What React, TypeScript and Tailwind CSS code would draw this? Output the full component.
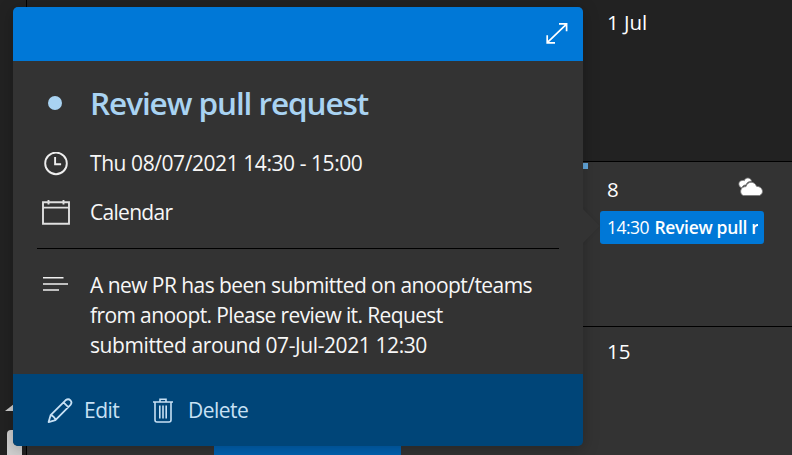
import React from "react";

function DayCell({ label, children, className }: { label: string; children?: React.ReactNode; className: string }) {
  return (
    <div className={`pl-[580px] pr-7 text-[20.5px] leading-[30px] text-white ${className}`}>
      <div className="flex items-center justify-between">
        <span>{label}</span>
        {label === "8" && <CloudIcon />}
      </div>
      {children}
    </div>
  );
}

function CloudIcon() {
  return (
    <svg className="mt-[-4px] h-[20px] w-[26px]" viewBox="0 0 26 20" fill="#fff" stroke="#777" strokeWidth="0.8">
      <path d="M3 10.5C0 9 0 4 4 3.5 5 3.2 6 3.5 6.3 3.7 7 0.5 12.5-.5 13.6 4.3 10 4 8.5 6.5 8 8 5.5 8 4.5 9 4 10.8Z" />
      <path d="M5.5 18.5C1.5 18 1.3 9.5 8 9.6 9.5 4 16.5 3.8 18.5 9.3 25 9.5 26.5 16.5 21.5 18.5Z" />
    </svg>
  );
}

function ExpandIcon() {
  return (
    <svg className="h-6 w-6" viewBox="0 0 24 24" fill="none" stroke="#fff" strokeWidth="1.7">
      <path d="M2.5 20.3 21.5 2.2M14 1.8h7.6v7.4M2.2 13.3v7.5H10" />
    </svg>
  );
}

function ClockIcon() {
  return (
    <svg className="h-6 w-7" viewBox="0 0 28 24" fill="none" stroke="#eee" strokeWidth="1.9">
      <circle cx="14" cy="11.4" r="10.8" />
      <path d="M13.1 5v7.3h6" />
    </svg>
  );
}

function CalendarIcon() {
  return (
    <svg className="h-[26px] w-7" viewBox="0 0 28 26" fill="none" stroke="#e0e0e0" strokeWidth="1.9">
      <path d="M1 2.2h26v21.6H1ZM1 7.6h26M6.5 0v4.5M21.5 0v4.5" />
    </svg>
  );
}

function NotesIcon() {
  return (
    <svg className="h-4 w-7" viewBox="0 0 28 16" fill="none" stroke="#f0f0f0" strokeWidth="1.6">
      <path d="M1 1.8h20.5M1 8h25M1 14h16" />
    </svg>
  );
}

function PencilIcon() {
  return (
    <svg className="h-[26px] w-[26px]" viewBox="0 0 26 26" fill="none" stroke="#c7e0f4" strokeWidth="1.8" strokeLinejoin="round">
      <path d="M1.6 24.1 3.6 17.2 18.5 2.3C22.3-.6 26.3 3.6 23.3 7.2L8.4 22.1ZM3.6 17.2c2 .2 4.6 2.7 4.8 4.9M16.5 4.3l5 5" />
    </svg>
  );
}

function TrashIcon() {
  return (
    <svg className="h-[26px] w-5" viewBox="0 0 20 26" fill="none" stroke="#c7e0f4" strokeWidth="1.6">
      <path d="M0 4h20M7 4V1.3h6V4M2 4v18Q2 24 4 24h12q2 0 2-2V4M6.8 7.5v13M10 7.5v13M13.2 7.5v13" />
    </svg>
  );
}

export default function App() {
  return (
    <div className="relative flex h-[455px] w-[792px] overflow-hidden bg-[#222] font-['Open_Sans','Noto_Sans',sans-serif]">
      <aside className="flex w-[26px] flex-col justify-end">
        <div className="ml-[5px] h-0 w-0 border-x-[9px] border-b-[7px] border-x-transparent border-b-[#d0d0d0]" />
        <div className="mt-[19px] ml-[7px] h-[25px] w-[15px] rounded-t bg-[#d0d0d0]" />
      </aside>
      <main className="flex min-w-0 flex-1 flex-col border-l border-black">
        <DayCell label="1 Jul" className="h-[161px] bg-[#222] pt-[7px]" />
        <DayCell label="8" className="h-[165px] border-t border-black bg-[#333] pt-3">
          <div className="mt-[7px] ml-[-7px] h-[33px] rounded-[3px] bg-[#0078d7] px-[7px] text-[17.5px] leading-[33px]">
            <div className="w-[151px] overflow-hidden whitespace-nowrap">
              <span className="tracking-[-0.55px]">14:30</span> <span className="ml-px font-semibold tracking-[-0.32px]">Review pull request</span>
            </div>
          </div>
        </DayCell>
        <DayCell label="15" className="h-[129px] border-t border-black bg-[#333] pt-[9px]">
          <div className="mt-[78px] ml-[-393px] h-3 w-[187px] bg-[#0062b1]" />
        </DayCell>
      </main>

      <div className="absolute top-[163px] left-[575px] h-[6px] w-[13px] bg-[#64a9df]" />

      <section className="absolute top-[7px] left-[13px] h-[439px] w-[570px] rounded-[5px] shadow-[0_3px_16px_rgba(0,0,0,0.25)]">
        <div className="absolute top-[207px] right-[-12px] h-6 w-6 rotate-45 bg-[#333] shadow-[0_0_4px_rgba(0,0,0,0.1)]" />
        <div className="relative flex h-full flex-col overflow-hidden rounded-[5px] bg-[#333] text-[21px] text-[#f7f7f7]">
          <header className="flex h-[54px] shrink-0 items-center justify-end bg-[#0078d7] pr-[14px]">
            <ExpandIcon />
          </header>
          <div className="flex-1 px-6">
            <div className="flex h-[83px] items-center">
              <span className="ml-[11px] h-[14px] w-[14px] rounded-full bg-[#a9d3f2]" />
              <h1 className="ml-7 text-[31.5px] font-semibold tracking-[-1.07px] whitespace-nowrap text-[#a9d3f2]">Review pull request</h1>
            </div>
            <div className="mt-1 flex h-8 items-center pl-[5px]">
              <ClockIcon />
              <span className="ml-5 tracking-[-0.43px] whitespace-nowrap">Thu 08/07/2021 14:30 - 15:00</span>
            </div>
            <div className="mt-[17px] flex h-8 items-center pl-[5px]">
              <CalendarIcon />
              <span className="ml-5 tracking-[-0.7px]">Calendar</span>
            </div>
            <hr className="mt-[19px] border-black" />
            <div className="mt-[21px] flex pl-[5px]">
              <div className="pt-[6px]"><NotesIcon /></div>
              <p className="ml-5 leading-[30px] tracking-[-0.55px] whitespace-nowrap">
                A new PR has been submitted on anoopt/teams<br />
                <span className="tracking-[-0.62px]">from anoopt. Please review it. Request</span><br />
                <span className="tracking-[-0.41px]">submitted around 07-Jul-2021 12:30</span>
              </p>
            </div>
          </div>
          <footer className="flex h-[72px] shrink-0 items-center bg-[#004578] pt-px pl-[34px] text-[#c7e0f4]">
            <PencilIcon />
            <span className="ml-[11px] w-9 tracking-[-0.5px]">Edit</span>
            <span className="ml-[33px]"><TrashIcon /></span>
            <span className="ml-[15px] tracking-[-0.5px]">Delete</span>
          </footer>
        </div>
      </section>
    </div>
  );
}
